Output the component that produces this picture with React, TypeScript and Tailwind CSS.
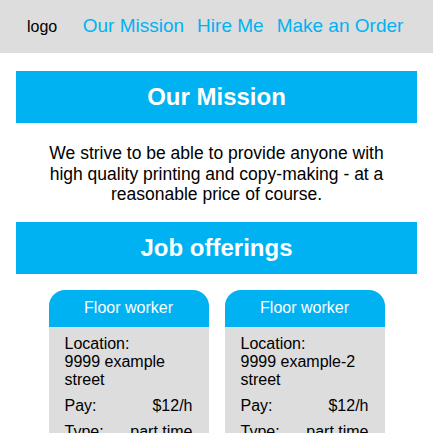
const jobs = [
  { title: 'Floor worker', location: '9999 example street', pay: '$12/h', type: 'part time' },
  { title: 'Floor worker', location: '9999 example-2 street', pay: '$12/h', type: 'part time' },
];

function JobCard({ job }: { job: (typeof jobs)[number] }) {
  return (
    <div className="w-[160px] flex flex-col">
      <div className="h-[37px] rounded-t-2xl bg-[#00b2f2] flex items-center justify-center text-white text-base">
        {job.title}
      </div>
      <div className="bg-[#dddddd] px-4 pt-2 pb-4 text-base text-black leading-[18px] flex flex-col gap-2">
        <div>
          <div>Location:</div>
          <div>{job.location}</div>
        </div>
        <div className="flex justify-between">
          <span>Pay:</span>
          <span>{job.pay}</span>
        </div>
        <div className="flex justify-between">
          <span>Type:</span>
          <span>{job.type}</span>
        </div>
      </div>
    </div>
  );
}

export default function App() {
  return (
    <div className="min-h-screen bg-white font-['Liberation_Sans',Arial,sans-serif]">
      <header className="h-[53px] bg-[#dddddd] flex items-center pl-[27px]">
        <span className="text-base text-black mr-[19px]">logo</span>
        <nav className="flex items-center text-[19px] text-[#00b2f2]">
          <a className="px-[6.5px]">Our Mission</a>
          <a className="px-[6.5px]">Hire Me</a>
          <a className="px-[6.5px]">Make an Order</a>
        </nav>
      </header>

      <main className="px-4 pt-[18px]">
        <h2 className="h-[52px] bg-[#00b2f2] flex items-center justify-center text-white text-2xl font-bold">
          Our Mission
        </h2>
        <p className="max-w-[345px] mx-auto text-center text-[17.5px] text-black leading-[20.5px] mt-5 mb-[17px]">
          We strive to be able to provide anyone with high quality printing and copy-making - at a reasonable price of course.
        </p>
        <h2 className="h-[52px] bg-[#00b2f2] flex items-center justify-center text-white text-2xl font-bold">
          Job offerings
        </h2>
        <div className="flex justify-center gap-4 mt-4">
          {jobs.map((job, i) => (
            <JobCard key={i} job={job} />
          ))}
        </div>
      </main>
    </div>
  );
}
